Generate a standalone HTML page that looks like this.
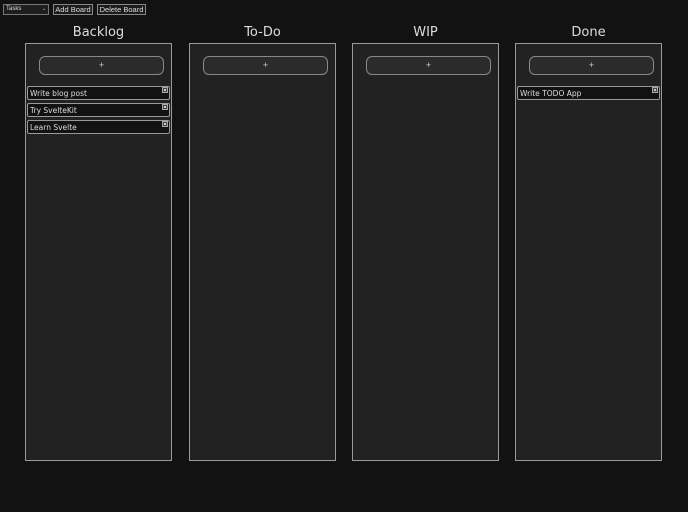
<!DOCTYPE html>
<html><head><meta charset="utf-8"><style>
*{box-sizing:border-box;margin:0;padding:0}
body{width:688px;height:512px;background:#121212;font-family:"Liberation Sans","DejaVu Sans",sans-serif;position:relative;overflow:hidden;color:#eee}
.sel{position:absolute;left:3px;top:4px;width:46px;height:11px;border:1px solid #777;background:#1e1e1e;font-size:6px;color:#ddd;padding-left:2px;line-height:9px}
.sel span{position:absolute;right:2px;top:0;font-size:5px}
.btn{position:absolute;top:4px;height:11px;border:1px solid #888;background:#1c1c1c;font-size:7.5px;color:#ddd;line-height:9px;text-align:center}
h2{position:absolute;top:25px;width:147px;text-align:center;font-weight:normal;font-size:13px;color:#ddd;font-family:"DejaVu Sans",sans-serif}
.col{position:absolute;top:43px;width:147px;height:418px;background:#222;border:1px solid #9a9a9a}
.add{position:absolute;left:13px;top:12px;width:125px;height:19px;border:1px solid #888;border-radius:6px;background:#2b2b2b;text-align:center;font-size:9px;line-height:17px;color:#ccc}
.card{position:absolute;left:1px;width:143px;height:14px;background:#121212;border:1px solid #999;border-radius:2px;font-size:7.5px;line-height:14px;padding-left:2px;color:#ddd;font-family:"DejaVu Sans",sans-serif}
.x{position:absolute;right:1px;top:0px;width:6px;height:6px;border:1px solid #aaa;background:#444}
.x:after{content:"";position:absolute;left:1px;top:1px;width:2px;height:2px;background:#ccc}
</style></head><body>
<div class="sel">Tasks<span>⌄</span></div>
<div class="btn" style="left:53px;width:40px">Add Board</div>
<div class="btn" style="left:97px;width:49px">Delete Board</div>

<h2 style="left:25px">Backlog</h2>
<h2 style="left:189px">To-Do</h2>
<h2 style="left:352px">WIP</h2>
<h2 style="left:515px">Done</h2>

<div class="col" style="left:25px"><div class="add">+</div>
<div class="card" style="top:42px">Write blog post<div class="x"></div></div>
<div class="card" style="top:59px">Try SvelteKit<div class="x"></div></div>
<div class="card" style="top:76px">Learn Svelte<div class="x"></div></div>
</div>
<div class="col" style="left:189px"><div class="add">+</div></div>
<div class="col" style="left:352px"><div class="add">+</div></div>
<div class="col" style="left:515px"><div class="add">+</div>
<div class="card" style="top:42px">Write TODO App<div class="x"></div></div>
</div>
</body></html>
